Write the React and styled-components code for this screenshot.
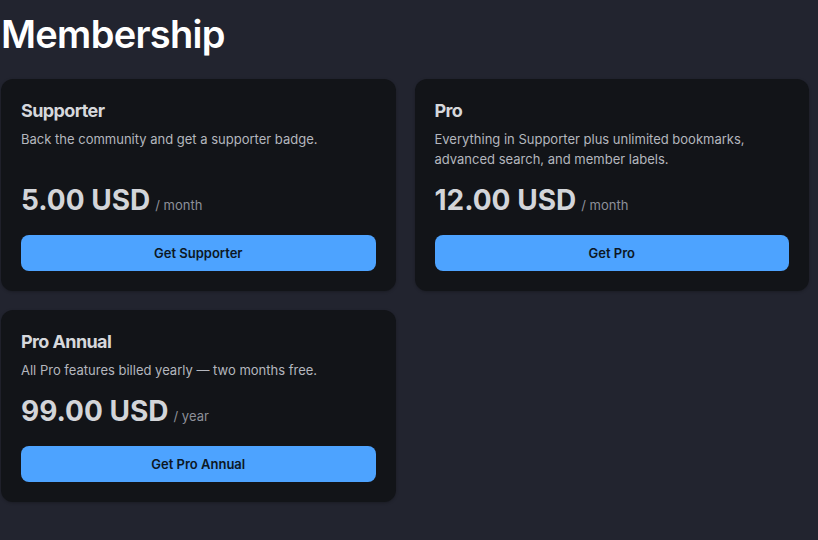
import React from "react";
import styled, { createGlobalStyle } from "styled-components";

const Global = createGlobalStyle`
  html, body { margin: 0; padding: 0; background: #22242f; }
  body { font-family: Inter, "Noto Sans", sans-serif; -webkit-font-smoothing: antialiased; }
  #root { min-height: 540px; }
`;

const Page = styled.main`
  padding: 0 9px 0 1px;
  color: #e6e7ea;
`;

const Heading = styled.h1`
  margin: 0;
  padding: 6px 0 17px 0;
  font-size: 38px;
  line-height: 56px;
  font-weight: 600;
  color: #ffffff;
  letter-spacing: -0.7px;
`;

const Grid = styled.div`
  display: grid;
  grid-template-columns: 1fr 1fr;
  gap: 19px;
`;

const Card = styled.section`
  background: #121418;
  border-radius: 12px;
  padding: 20px;
  display: flex;
  flex-direction: column;
  box-shadow: 0 1px 3px rgba(0, 0, 0, 0.25);
`;

const Title = styled.h2`
  margin: 0 0 6px 0;
  font-size: 18px;
  line-height: 24px;
  font-weight: 700;
  letter-spacing: -0.6px;
  color: #d6d8dc;
`;

const Desc = styled.p`
  margin: 0;
  font-size: 13px;
  line-height: 20px;
  color: #b4b7be;
`;

const PriceRow = styled.div`
  margin-top: auto;
  padding-top: 14px;
  display: flex;
  align-items: baseline;
  gap: 5px;
`;

const Amount = styled.span`
  font-size: 28px;
  line-height: 34px;
  font-weight: 700;
  color: #d3d5d9;
`;

const Period = styled.span`
  font-size: 13px;
  color: #8d9099;
`;

const Button = styled.button`
  margin-top: 18px;
  height: 36px;
  border: none;
  border-radius: 8px;
  background: #4da3ff;
  color: #0c1724;
  font-family: inherit;
  font-size: 13px;
  font-weight: 600;
  cursor: pointer;
`;

const plans = [
  { name: "Supporter", desc: "Back the community and get a supporter badge.", price: "5.00 USD", period: "/ month" },
  { name: "Pro", desc: "Everything in Supporter plus unlimited bookmarks, advanced search, and member labels.", price: "12.00 USD", period: "/ month" },
  { name: "Pro Annual", desc: "All Pro features billed yearly — two months free.", price: "99.00 USD", period: "/ year" },
];

export default function App() {
  return (
    <>
      <Global />
      <Page>
        <Heading>Membership</Heading>
        <Grid>
          {plans.map((p) => (
            <Card key={p.name}>
              <Title>{p.name}</Title>
              <Desc>{p.desc}</Desc>
              <PriceRow>
                <Amount>{p.price}</Amount>
                <Period>{p.period}</Period>
              </PriceRow>
              <Button>Get {p.name}</Button>
            </Card>
          ))}
        </Grid>
      </Page>
    </>
  );
}
